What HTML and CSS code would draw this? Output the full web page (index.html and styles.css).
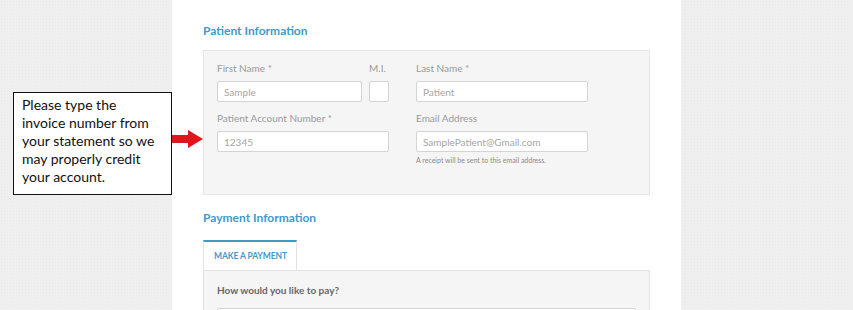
FILE: index.html
```html
<!DOCTYPE html>
<html lang="en">
<head>
    <meta charset="UTF-8">
    <meta name="viewport" content="width=device-width, initial-scale=1.0">
    <title>Patient Payment</title>
    <link rel="stylesheet" href="styles.css">
</head>
<body>
    <div class="page">
        <div class="panel">
            <h2 class="section-title">Patient Information</h2>
            <div class="form-box">
                <div class="form-grid">
                    <div class="field">
                        <label>First Name *</label>
                        <input type="text" placeholder="Sample">
                    </div>
                    <div class="field">
                        <label>M.I.</label>
                        <input type="text">
                    </div>
                    <div class="field col-last">
                        <label>Last Name *</label>
                        <input type="text" placeholder="Patient">
                    </div>
                    <div class="field span-two">
                        <label>Patient Account Number *</label>
                        <input type="text" placeholder="12345">
                    </div>
                    <div class="field col-last">
                        <label>Email Address</label>
                        <input type="text" placeholder="SamplePatient@Gmail.com">
                        <small class="hint">A receipt will be sent to this email address.</small>
                    </div>
                </div>
            </div>

            <h2 class="section-title payment-title">Payment Information</h2>
            <div class="tabs">
                <div class="tab active">MAKE A PAYMENT</div>
            </div>
            <div class="tab-body">
                <p class="question">How would you like to pay?</p>
                <div class="select-box"></div>
            </div>
        </div>

        <!-- note added on top of the screenshot -->
        <div class="callout">
            Please type the<br>
            invoice number from<br>
            your statement so we<br>
            may properly credit<br>
            your account.
        </div>
        <svg class="arrow" width="32" height="20" viewBox="0 0 32 20">
            <polygon points="0,6 16,6 16,1 31,10 16,19 16,14 0,14" fill="#e0161c"/>
        </svg>
    </div>
</body>
</html>
```

FILE: styles.css
```css
body {
    margin: 0;
    padding: 0;
    background-color: #efefef;
    background-image: radial-gradient(#e9e9e9 0.6px, transparent 0.8px);
    background-size: 3px 3px;
    font-family: 'Lato', 'Open Sans', sans-serif;
    overflow: hidden;
}

.page {
    position: relative;
    height: 310px;
    overflow: hidden;
}

.panel {
    margin-left: 172px;
    width: 509px;
    height: 310px;
    box-sizing: border-box;
    padding: 22px 31px 0 31px;
    background-color: #ffffff;
}

.section-title {
    margin: 0 0 10px 0;
    font-size: 12px;
    line-height: 18px;
    font-weight: 700;
    color: #3f9acb;
}

.payment-title {
    margin-top: 14px;
    margin-bottom: 13px;
}

.form-box {
    background-color: #f5f5f5;
    border: 1px solid #e6e6e6;
    padding: 10px 13px 29px 13px;
}

.form-grid {
    display: grid;
    grid-template-columns: 145px 20px 192px;
    column-gap: 7px;
    row-gap: 9px;
}

.field {
    display: flex;
    flex-direction: column;
}

.col-last {
    padding-left: 20px;
}

.span-two {
    grid-column: 1 / 3;
}

.field label {
    font-size: 10px;
    line-height: 14px;
    color: #9a9a9a;
    margin-bottom: 6px;
}

.field input {
    height: 21px;
    box-sizing: border-box;
    border: 1px solid #d4d4d4;
    border-radius: 2px;
    background-color: #ffffff;
    padding: 0 6px;
    font-family: 'Lato', 'Open Sans', sans-serif;
    font-size: 10px;
    color: #555;
}

.field input::placeholder {
    color: #a5a5a5;
}

.hint {
    margin-top: 3px;
    font-size: 7px;
    line-height: 10px;
    color: #8a8a8a;
}

.tabs {
    display: flex;
}

.tab {
    width: 94px;
    height: 30px;
    box-sizing: border-box;
    padding-left: 10px;
    display: flex;
    align-items: center;
    font-size: 8.5px;
    font-weight: 700;
    letter-spacing: -0.1px;
    color: #3f9acb;
    background-color: #ffffff;
    border-top: 2px solid #3f9acb;
    border-left: 1px solid #e3e3e3;
    border-right: 1px solid #e3e3e3;
}

.tab-body {
    background-color: #f5f5f5;
    border: 1px solid #e3e3e3;
    padding: 12px 13px 0 13px;
    height: 60px;
}

.question {
    margin: 0 0 11px 0;
    font-size: 10px;
    line-height: 14px;
    font-weight: 700;
    color: #676767;
}

.select-box {
    width: 419px;
    height: 24px;
    box-sizing: border-box;
    background-color: #ffffff;
    border: 1px solid #d4d4d4;
    border-radius: 2px;
}

.callout {
    position: absolute;
    left: 13px;
    top: 92px;
    width: 159px;
    height: 103px;
    box-sizing: border-box;
    border: 1px solid #111;
    background-color: #ffffff;
    padding: 3px 0 0 8px;
    font-family: 'Lato', sans-serif;
    font-size: 14px;
    line-height: 18px;
    white-space: nowrap;
    color: #111;
}

.arrow {
    position: absolute;
    left: 172px;
    top: 129px;
}
```
